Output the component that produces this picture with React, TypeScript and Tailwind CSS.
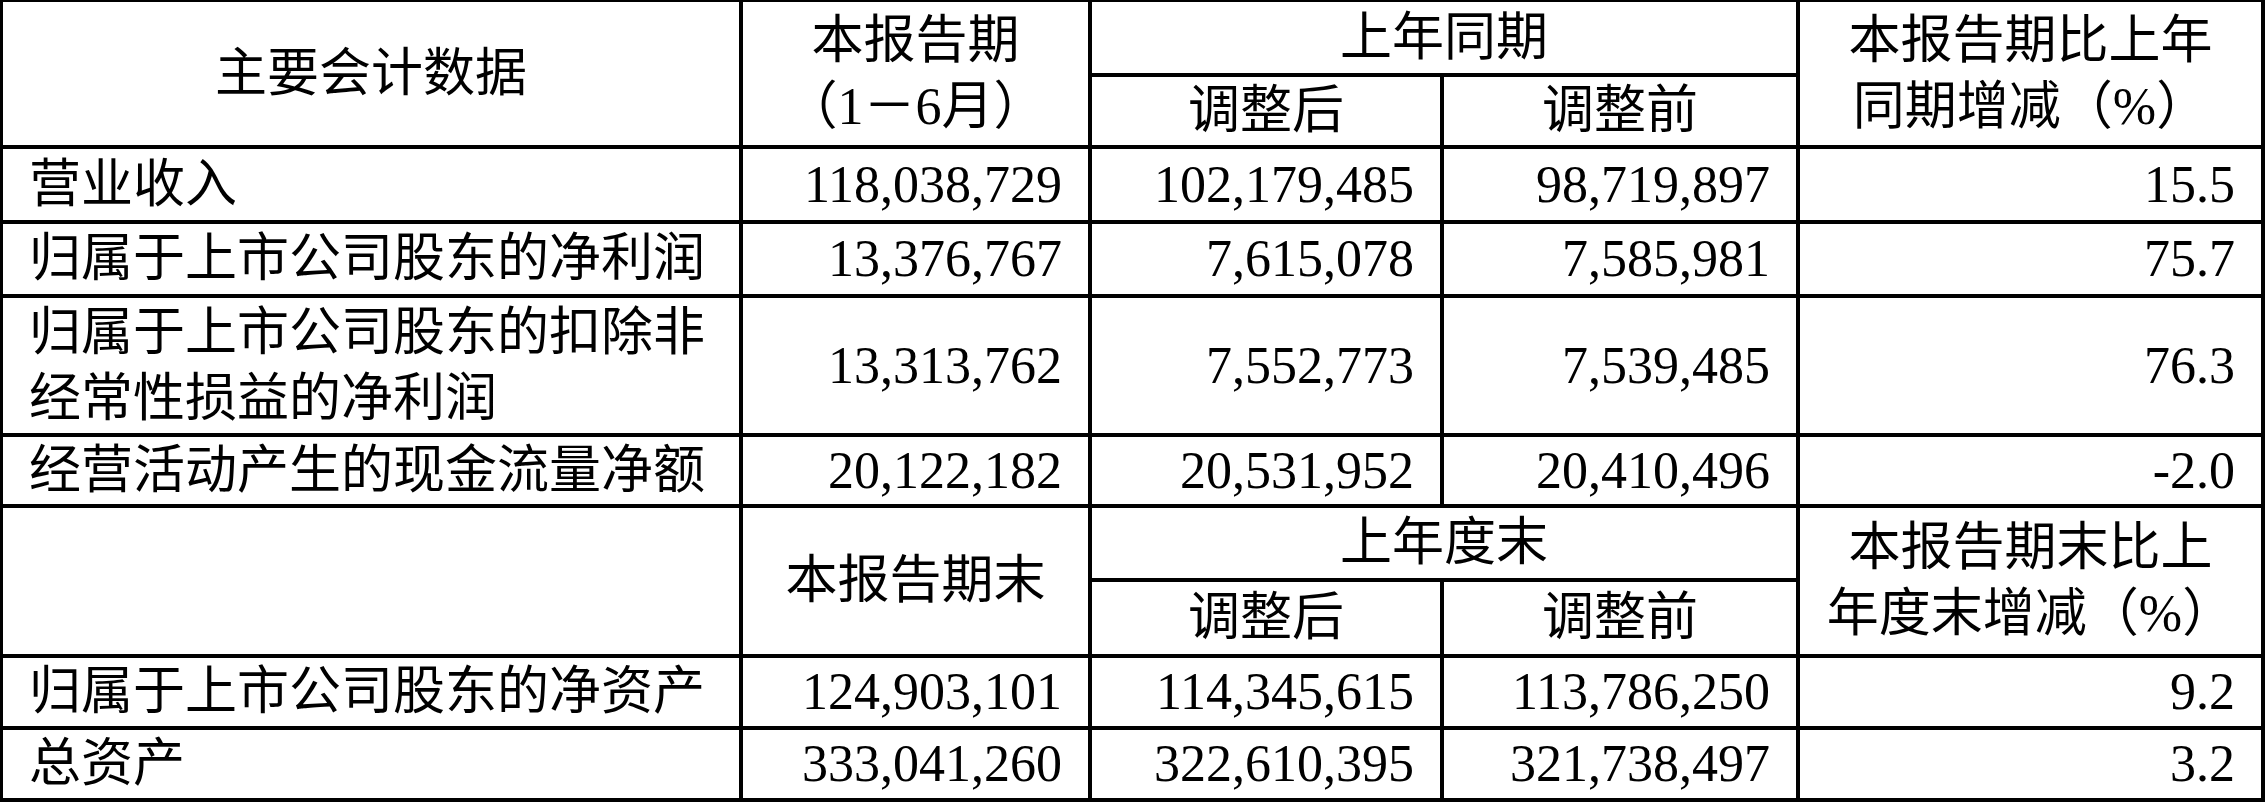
import React from 'react'

const font = { fontFamily: '"Liberation Serif", "Noto Sans CJK SC", serif' }

const cell = 'border-r-[4px] border-b-[4px] border-black flex items-center'
const label = `${cell} justify-start pl-[26px]`
const num = `${cell} justify-end pr-[26px]`
const head = `${cell} justify-center text-center`

const rows1 = [
  { name: '营业收入', v: ['118,038,729', '102,179,485', '98,719,897', '15.5'] },
  { name: '归属于上市公司股东的净利润', v: ['13,376,767', '7,615,078', '7,585,981', '75.7'] },
  { name: '归属于上市公司股东的扣除非\n经常性损益的净利润', v: ['13,313,762', '7,552,773', '7,539,485', '76.3'] },
  { name: '经营活动产生的现金流量净额', v: ['20,122,182', '20,531,952', '20,410,496', '-2.0'] },
]

const rows2 = [
  { name: '归属于上市公司股东的净资产', v: ['124,903,101', '114,345,615', '113,786,250', '9.2'] },
  { name: '总资产', v: ['333,041,260', '322,610,395', '321,738,497', '3.2'] },
]

function Lines({ text }: { text: string }) {
  return (
    <div>
      {text.split('\n').map((l, i) => (
        <React.Fragment key={i}>
          {i > 0 && <br />}
          {l}
        </React.Fragment>
      ))}
    </div>
  )
}

function DataRow({ r }: { r: { name: string; v: string[] } }) {
  return (
    <>
      <div className={label}><Lines text={r.name} /></div>
      {r.v.map((x, i) => (
        <div key={i} className={num}>{x}</div>
      ))}
    </>
  )
}

function Header({ left, first, group, last }: { left: string; first: string; group: string; last: string }) {
  return (
    <>
      <div className={`${head} row-span-2`}><Lines text={left} /></div>
      <div className={`${head} row-span-2`}><Lines text={first} /></div>
      <div className={`${head} col-span-2`}>{group}</div>
      <div className={`${head} row-span-2`}><Lines text={last} /></div>
      <div className={head}>调整后</div>
      <div className={head}>调整前</div>
    </>
  )
}

export default function App() {
  return (
    <div className="w-[2265px] h-[804px] bg-white overflow-hidden">
      <div
        style={font}
        className="grid w-[2265px] grid-cols-[740px_349px_352px_356px_465px] grid-rows-[75px_72px_75px_74px_139px_71px_74px_76px_72px_72px] border-l-[3px] border-t-[2px] border-black text-[52px] leading-[66px] text-black"
      >
        <Header left="主要会计数据" first={'本报告期\n（1－6月）'} group="上年同期" last={'本报告期比上年\n同期增减（%）'} />
        {rows1.map(r => <DataRow key={r.name} r={r} />)}
        <Header left="" first="本报告期末" group="上年度末" last={'本报告期末比上\n年度末增减（%）'} />
        {rows2.map(r => <DataRow key={r.name} r={r} />)}
      </div>
    </div>
  )
}
